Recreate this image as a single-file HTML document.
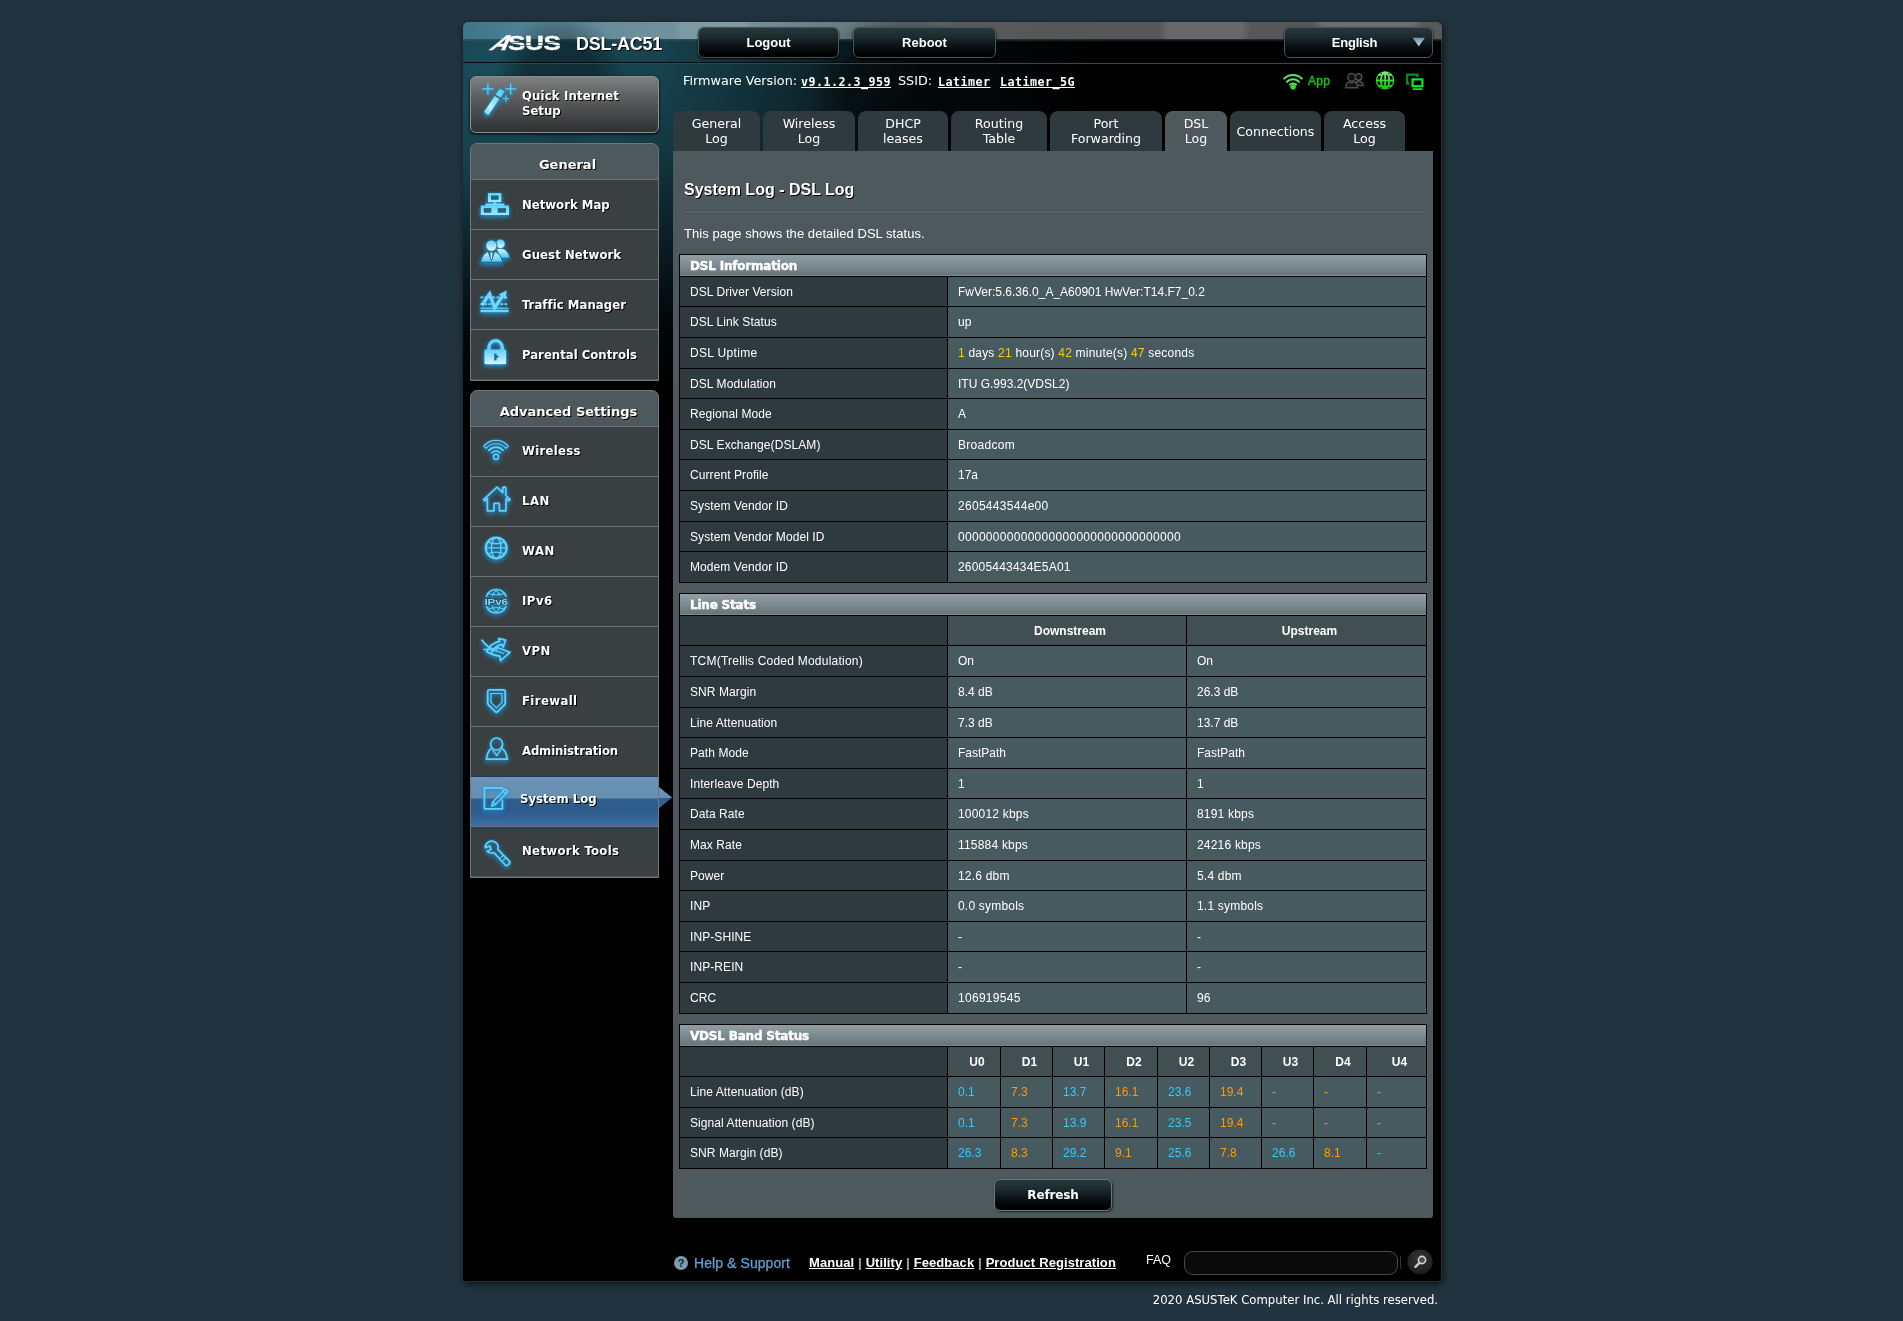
<!DOCTYPE html>
<html lang="en">
<head>
<meta charset="utf-8">
<title>ASUS Wireless Router DSL-AC51 - DSL Log</title>
<style>
html,body{margin:0;padding:0;}
body{width:1903px;height:1321px;overflow:hidden;background:#21333e;position:relative;font-family:"Liberation Sans",Arial,sans-serif;color:#fff;font-size:12px;}
a{color:#fff;}
.abs{position:absolute;}
#wrap{will-change:transform;position:absolute;left:463px;top:22px;width:979px;height:1260px;background:#000;border-radius:5px 5px 4px 4px;overflow:hidden;box-shadow:inset -1px -1px 0 #2c2c2c, 1px 2px 6px rgba(0,0,0,.65);}
#glow{position:absolute;left:0;top:0;width:979px;height:520px;background:
 radial-gradient(ellipse 610px 345px at 30px 40px, rgb(27,75,89) 0%, rgba(24,68,80,.96) 28%, rgba(15,44,52,.78) 55%, rgba(6,18,22,.4) 80%, rgba(0,0,0,0) 100%);}
#topband{position:absolute;left:0;top:0;width:979px;height:17px;background:
 radial-gradient(circle 46px at 742px 8px, rgba(255,255,255,.1) 0, rgba(255,255,255,.1) 80%, rgba(255,255,255,0) 100%),
 radial-gradient(circle 56px at 905px -6px, rgba(255,255,255,.13) 0, rgba(255,255,255,.13) 80%, rgba(255,255,255,0) 100%),
 radial-gradient(circle 40px at 250px 4px, rgba(255,255,255,.08) 0, rgba(255,255,255,.08) 80%, rgba(255,255,255,0) 100%),
 linear-gradient(90deg,#3f7589 0%,#4c8194 6%,#6b909b 17%,#74939b 28%,#66797e 40%,#585c5d 50%,#565656 60%,#585858 100%);}
#topband2{position:absolute;left:0;top:17px;width:979px;height:3px;background:linear-gradient(180deg,rgba(70,95,104,.55),rgba(0,0,0,0));}
#bokeh{position:absolute;left:0;top:0;width:979px;height:300px;background:
 radial-gradient(circle 66px at 98px 58px, rgba(0,0,0,.36) 0, rgba(0,0,0,.34) 55%, rgba(0,0,0,0) 100%),
 radial-gradient(circle 88px at 432px 78px, rgba(0,0,0,.5) 0, rgba(0,0,0,.48) 55%, rgba(0,0,0,0) 100%);}
#hline{position:absolute;left:0;top:40px;width:979px;height:1px;background:#06090b;border-bottom:1px solid #34464f;}
/* header */
#logo{position:absolute;left:22px;top:12px;width:78px;height:18px;overflow:hidden;}
#asus{position:absolute;left:22.5px;top:-3px;font:bold 21px/24px "Liberation Sans",Arial,sans-serif;color:#fff;letter-spacing:-.3px;transform:scale(1.24,1);transform-origin:0 50%;-webkit-text-stroke:.4px #fff;}
#asusA{position:absolute;left:3px;top:-3px;font:bold 21px/24px "Liberation Sans",Arial,sans-serif;color:#fff;transform:scale(1.12,1) skewX(-36deg);transform-origin:0 82%;-webkit-text-stroke:.5px #fff;}
.cut{position:absolute;left:26px;width:49px;height:1px;background:rgba(25,62,76,.6);}
#model{position:absolute;left:113px;top:11px;font:bold 18px/22px "Liberation Sans",Arial,sans-serif;letter-spacing:-.25px;color:#fff;text-shadow:1px 1px 0 #000;}
.hbtn{position:absolute;top:4.6px;height:31px;border-radius:6px;background:linear-gradient(180deg,#27393e 0%,#1c2b2f 30%,#0a1214 62%,#000 92%);border:1px solid #46555a;box-shadow:0 1px 2px #000;box-sizing:border-box;text-align:center;font:bold 13px/29px "Liberation Sans",Arial,sans-serif;color:#fff;}
/* menu */
.mtext{font:bold 13px/15px "DejaVu Sans Condensed","DejaVu Sans",Verdana,sans-serif;color:#fff;text-shadow:1px 1px 0 #000;}
#qis{position:absolute;left:7px;top:54px;width:189px;height:57px;box-sizing:border-box;border:1px solid #8b8f90;border-radius:6px;background:linear-gradient(180deg,#7e8081 0%,#5e6061 35%,#2f3031 100%);box-shadow:0 1px 3px #000;}
#qis .mtext{position:absolute;left:51px;top:11px;}
.mbox{position:absolute;left:7px;width:189px;box-sizing:border-box;background:#4d595d;border:1px solid #6f777a;border-radius:7px 7px 0 0;overflow:hidden;}
.mhead{height:35px;text-align:center;font:bold 13px/42px "DejaVu Sans",Verdana,sans-serif;color:#fff;text-shadow:1px 1px 0 #000;padding-left:6px;}
.mi{position:relative;height:49px;border-top:1px solid #6b7174;background:#3a4042;}
.mi .mtext{position:absolute;left:51px;top:17px;}
.mi svg,#qis svg{position:absolute;left:8px;top:8px;overflow:visible;}
.mi.sel{background:linear-gradient(180deg,#6b93b5 0%,#6690b3 42%,#2f5d8d 46%,#2c5a8a 70%,#3c72a8 100%);border-top:1px solid #27394a;}
.mi.sel .mtext{left:49px;top:14px;}
.adv .mi .mtext{top:16px;}
.adv .mi.sel .mtext{top:14px;}
/* top info */
#fw{position:absolute;left:220px;top:51px;font:12.8px/16px "DejaVu Sans",Verdana,sans-serif;color:#fff;white-space:nowrap;}
#fw span,#fw a{position:absolute;top:0;}
#fw a{font:bold 11.7px/16px "DejaVu Sans Mono","Liberation Mono",monospace;letter-spacing:.46px;color:#fff;text-decoration:underline;top:1px;}
/* tabs */
.tab{position:absolute;top:89px;height:40px;box-sizing:border-box;background:#2f3a3e;border-radius:8px 8px 0 0;text-align:center;font:12.6px/15px "DejaVu Sans",Verdana,sans-serif;color:#fff;padding-top:5px;}
.tab.one{padding-top:13px;}
.tab.on{background:#4d595d;}
/* content */
#content{position:absolute;left:210px;top:129px;width:760px;height:1067px;background:#4d595d;border-radius:0 0 3px 3px;}
#title{position:absolute;left:11px;top:29px;font:bold 16px/20px "Liberation Sans",Arial,sans-serif;text-shadow:1px 1px 0 #000;}
#hr{position:absolute;left:11px;top:59px;width:740px;height:1px;background:#3e4a4e;border-bottom:1px solid #5d696d;}
#desc{position:absolute;left:11px;top:74px;font:13px/18px "Liberation Sans",Arial,sans-serif;letter-spacing:.05px;}
table.ft{position:absolute;left:6px;width:748px;border-collapse:collapse;table-layout:fixed;border:1px solid #000;font:12px/21.6px "Liberation Sans",Arial,sans-serif;}
table.ft td,table.ft th{border:1px solid #000;padding:5px 0 3px 10px;text-align:left;font-weight:normal;white-space:nowrap;overflow:hidden;}
table.ft th{background:#2f3a3e;}
table.ft td{background:#475a5f;}
table.ft thead td{background:linear-gradient(180deg,#92a0a5 0%,#66757c 100%);font:bold 12px/15px "DejaVu Sans",Verdana,sans-serif;padding:4px 0 2px 10px;-webkit-text-stroke:.42px #fff;letter-spacing:-.2px;}
table.ft td.c{text-align:center;font-weight:bold;padding-left:6px;background:#414f53;}
table.ft th{letter-spacing:.08px;}
.n{letter-spacing:.29px;}
.n2{letter-spacing:.2px;}
.y{color:#ffcc00;}
.b{color:#3cf;}
.o{color:#ff9a0a;}
#refresh{position:absolute;left:321px;top:1028px;width:118px;height:32px;box-sizing:border-box;border-radius:6px;background:linear-gradient(180deg,#27393e 0%,#1c2b2f 30%,#0a1214 62%,#000 92%);border:1px solid #6a767a;box-shadow:1px 1px 2px #1a2224;text-align:center;font:bold 12px/31px "DejaVu Sans",Verdana,sans-serif;letter-spacing:-.15px;}
/* footer */
#foot{position:absolute;left:0;top:1228px;width:978px;height:24px;}
#foot a{text-decoration:underline;}
#copy{will-change:transform;position:absolute;left:463px;top:1291.7px;width:975px;text-align:right;font:11.68px/16px "DejaVu Sans",Verdana,sans-serif;color:#fff;}
.ic{fill:none;stroke:#62d0fa;stroke-width:1.7;stroke-linejoin:round;stroke-linecap:round;}
.icf{fill:#7bdcff;stroke:none;}
.mi svg,#qis svg{filter:drop-shadow(0 2px 2px rgba(21,151,224,.78)) drop-shadow(0 0 1px rgba(26,143,208,.6));}
</style>
</head>
<body>
<div id="wrap">
 <div id="glow"></div>
 <div id="topband"></div><div id="topband2"></div><div id="bokeh"></div>
 <div id="hline"></div>
 <div id="logo"><span id="asusA">A</span><span id="asus">SUS</span><span class="cut" style="top:8px"></span><span class="cut" style="top:11px"></span></div>
 <div id="model">DSL-AC51</div>
 <div class="hbtn" style="left:235px;width:141px;">Logout</div>
 <div class="hbtn" style="left:390px;width:143px;">Reboot</div>
 <div class="hbtn" style="left:821px;width:149px;padding-right:8px;letter-spacing:-.2px;">English<svg class="abs" style="left:127px;top:9px" width="14" height="10" viewBox="0 0 14 10"><defs><linearGradient id="tr" x1="0" y1="0" x2="0" y2="1"><stop offset="0" stop-color="#6f8fa8"/><stop offset="1" stop-color="#c4dceb"/></linearGradient></defs><path d="M.6 .8H13L6.8 9.2Z" fill="url(#tr)"/></svg></div>

 <div id="fw"><span style="left:0">Firmware Version:</span><a style="left:118px">v9.1.2.3_959</a><span style="left:215px">SSID:</span><a style="left:255px">Latimer</a><a style="left:317px">Latimer_5G</a></div>

 <div id="sticons">
  <svg class="abs" style="left:819px;top:49px" width="24" height="20" viewBox="0 0 24 20"><g fill="none" stroke="#5fe85f" stroke-linecap="round"><path d="M2.2 7.6A12.6 12.6 0 0 1 19.8 7.6" stroke-width="2"/><path d="M5 10.8A8.4 8.4 0 0 1 17 10.8" stroke-width="2"/><path d="M7.8 13.6A4.6 4.6 0 0 1 14.2 13.6" stroke-width="1.8"/></g><circle cx="11.1" cy="15.7" r="2.8" fill="#2ee02e"/></svg>
  <div class="abs" style="left:845px;top:52px;font:12px/14px 'Liberation Sans',Arial,sans-serif;color:#12c612;-webkit-text-stroke:.4px #12c612;letter-spacing:.3px;">App</div>
  <svg class="abs" style="left:880px;top:49px" width="24" height="20" viewBox="0 0 24 20"><g fill="#111" stroke="#4c4c4c" stroke-width="1.5"><circle cx="15.6" cy="6" r="3.2"/><path d="M11.5 14.5Q12 10.4 15.6 10.2Q19.6 10.4 20.4 14.5Z"/><circle cx="8.6" cy="6.4" r="3.8"/><path d="M2.6 16.8Q3 11.4 6.4 10.8Q8.6 12.6 10.8 10.8Q14.2 11.4 14.8 16.8Z"/></g></svg>
  <svg class="abs" style="left:911px;top:48px" width="22" height="22" viewBox="0 0 22 22"><defs><linearGradient id="gg" x1="0" y1="0" x2="0" y2="1"><stop offset="0" stop-color="#8cf08c"/><stop offset=".45" stop-color="#3be03b"/><stop offset="1" stop-color="#16c716"/></linearGradient></defs><circle cx="11.1" cy="10.4" r="9.2" fill="url(#gg)"/><g fill="#000"><path d="M4.2 6.2Q6 5.6 6.9 5.4Q6.2 7.4 6 9.4H3.4Q3.5 7.6 4.2 6.2ZM3.4 11.4H6Q6.2 13.4 6.9 15.4Q6 15.2 4.2 14.6Q3.5 13.2 3.4 11.4Z"/><path d="M18 6.2Q16.2 5.6 15.3 5.4Q16 7.4 16.2 9.4H18.8Q18.7 7.6 18 6.2ZM18.8 11.4H16.2Q16 13.4 15.3 15.4Q16.2 15.2 18 14.6Q18.7 13.2 18.8 11.4Z"/><path d="M8.9 5Q10 4.8 10.2 4.8V9.4H8Q8.2 7 8.9 5ZM13.3 5Q12.2 4.8 12 4.8V9.4H14.2Q14 7 13.3 5ZM8 11.4H10.2V16Q10 16 8.9 15.8Q8.2 13.8 8 11.4ZM14.2 11.4H12V16Q12.2 16 13.3 15.8Q14 13.8 14.2 11.4Z"/><path d="M6 3.6Q7 2.8 8.6 2.4Q7.8 3.2 7.4 3.9ZM16.2 3.6Q15.2 2.8 13.6 2.4Q14.4 3.2 14.8 3.9ZM6 17.2Q7 18 8.6 18.4Q7.8 17.6 7.4 16.9ZM16.2 17.2Q15.2 18 13.6 18.4Q14.4 17.6 14.8 16.9Z"/></g></svg>
  <svg class="abs" style="left:941px;top:49px" width="22" height="22" viewBox="0 0 22 22"><path d="M3.2 12.4V3.6H13.4V6" fill="none" stroke="#0a8d1c" stroke-width="2.2"/><rect x="2.2" y="11.2" width="3" height="2.6" fill="#0a8d1c"/><rect x="8.6" y="8.4" width="9.8" height="6.8" fill="none" stroke="#12e62a" stroke-width="2.2"/><path d="M8.6 18.2H18.4" stroke="#12e62a" stroke-width="1.8"/></svg>
 </div>
 <div id="qis"><svg width="40" height="34" viewBox="0 0 40 34"><defs><linearGradient id="wd" x1="0" y1="1" x2="1" y2="0"><stop offset="0" stop-color="#52ccfb"/><stop offset=".3" stop-color="#c4f0ff"/><stop offset=".62" stop-color="#7adfff"/><stop offset="1" stop-color="#3fd3ff"/></linearGradient></defs><path d="M4.9 27.1L20.8 3.8L25.6 6.3L9.3 30.3Z" fill="url(#wd)"/><path d="M15.6 9.9L21.6 13.4" stroke="#46606c" stroke-width="1.7"/><g stroke="#62d0fa" stroke-width="1.25" fill="none"><path d="M8.9 -1.8V9.6M3.2 3.9H14.6M31.7 -1.8V9.4M26.4 3.8H37.4"/><path d="M27 10.6V16.8M24 13.7H30" stroke-width="1.05"/></g></svg><div class="mtext"><span style="letter-spacing:.15px">Quick Internet</span><br>Setup</div></div>

 <div class="mbox" style="top:121px;height:238px;">
  <div class="mhead">General</div>
  <div class="mi"><svg width="34" height="34" viewBox="0 0 34 34"><defs><linearGradient id="nmg" x1="0" y1="0" x2="0" y2="1"><stop offset="0" stop-color="#55d4ff"/><stop offset="1" stop-color="#9ee8ff"/></linearGradient></defs><g fill="url(#nmg)"><rect x="9" y="5" width="13.3" height="9.1"/><rect x="14.7" y="14" width="1.9" height="2"/><rect x="6.4" y="15.5" width="18.9" height="2.2"/><rect x="1.8" y="17.5" width="13.5" height="9.5"/><rect x="15.7" y="17.5" width="14.3" height="9.5"/></g><g fill="#27607c"><rect x="12" y="7.5" width="7.6" height="4.3"/><rect x="4.8" y="20.1" width="7.5" height="4.6"/><rect x="18.7" y="20.1" width="8.3" height="4.6"/></g><path d="M15.5 17.7V27" stroke="#c9f3ff" stroke-width=".6"/></svg><div class="mtext">Network Map</div></div>
  <div class="mi"><svg width="34" height="34" viewBox="0 0 34 34"><defs><linearGradient id="gn" x1="0" y1="0" x2="0" y2="1"><stop offset="0" stop-color="#4fd0ff"/><stop offset="1" stop-color="#e6fbff"/></linearGradient><linearGradient id="gn2" x1="0" y1="0" x2="0" y2="1"><stop offset="0" stop-color="#d4f5ff"/><stop offset="1" stop-color="#49c8f7"/></linearGradient></defs><circle cx="21.4" cy="5.8" r="4.3" fill="url(#gn)"/><path d="M18 11.2Q21.4 10 25 11.4Q29.2 13.6 30.4 19.6H21.5Z" fill="url(#gn2)"/><g stroke="#2a5468" stroke-width=".9"><circle cx="12.4" cy="7.6" r="5.7" fill="url(#gn)"/><path d="M1.6 24.2Q3.4 15.4 9.2 13.5L12.4 22.6L15.8 13.5Q21.6 15.4 23.8 24.2Z" fill="url(#gn2)"/></g><path d="M11.5 14.6H13.4L13.1 20L12.4 21.8L11.8 20Z" fill="#c8f2ff"/></svg><div class="mtext" style="letter-spacing:0.08px">Guest Network</div></div>
  <div class="mi"><svg width="34" height="34" viewBox="0 0 34 34"><g fill="none" stroke="#6fd6fb"><path d="M1.5 9.4H29.5M1.5 16.2H29.5" stroke-width="1.7" stroke-dasharray="2.6 1.4"/><path d="M1.5 20.2H29.5" stroke-width="1.1"/><path d="M1.5 23H29.5" stroke-width="2.4"/><path d="M2.8 17.4L10.6 6L15.6 19.8L23.8 7.6" stroke-width="3.4" stroke-linejoin="miter"/></g><path d="M19.8 6.4L27.6 2.6L26.6 11.2Z" fill="#6fd6fb"/></svg><div class="mtext" style="letter-spacing:0.05px">Traffic Manager</div></div>
  <div class="mi"><svg width="34" height="34" viewBox="0 0 34 34"><defs><linearGradient id="pc" x1="0" y1="0" x2="0" y2="1"><stop offset="0" stop-color="#5fd0ff"/><stop offset="1" stop-color="#d5f5ff"/></linearGradient></defs><path d="M10 12V9.3A6.6 6.6 0 0 1 23.2 9.3V12" fill="none" stroke="#63d2ff" stroke-width="3.4"/><rect x="5.4" y="11.5" width="21.8" height="14.8" rx="1.2" fill="url(#pc)"/><path d="M15.2 15.5H17.6V17.6H19.3V19.8H17.6V22.6H15.2Z" fill="#1d6f96"/></svg><div class="mtext">Parental Controls</div></div>
 </div>

 <div class="mbox adv" style="top:368px;height:488px;">
  <div class="mhead" style="padding-left:8px">Advanced Settings</div>
  <div class="mi"><svg width="34" height="34" viewBox="0 0 34 34"><g fill="none" stroke="#62d0fa" stroke-linejoin="round" stroke-linecap="round"><path d="M4.7 11.2A16 16 0 0 1 29.3 11.2L27 13.4A13 13 0 0 0 7 13.4Z" stroke-width="1.15"/><path d="M9.9 15.3A9.6 9.6 0 0 1 24.1 15.3" stroke-width="1.7"/><path d="M12.8 17.7A6 6 0 0 1 21.2 17.7" stroke-width="1.5"/><circle cx="17" cy="21.8" r="2.6" stroke-width="1.5"/></g></svg><div class="mtext" style="letter-spacing:0.3px">Wireless</div></div>
  <div class="mi"><svg width="34" height="34" viewBox="0 0 34 34"><path class="ic" d="M4.6 14.6L18 2.2L23.8 7.5V2.6Q25.3 1.4 26.8 2.6V10.3L31 14.4L29.6 15.8L27 13.6V25.8H20.4V18.4H15V25.8H8.4V13.6L6 15.9Z"/></svg><div class="mtext" style="letter-spacing:0.55px">LAN</div></div>
  <div class="mi"><svg width="34" height="34" viewBox="0 0 34 34"><g class="ic"><circle cx="17.2" cy="12.9" r="10.4" stroke-width="2.2"/><ellipse cx="17.2" cy="12.9" rx="4.8" ry="10.4" stroke-width="1.4"/><path d="M6.8 12.9H27.6M9 7.2Q17.2 10.2 25.4 7.2M9 18.6Q17.2 15.6 25.4 18.6" stroke-width="1.4"/></g></svg><div class="mtext" style="letter-spacing:0.6px">WAN</div></div>
  <div class="mi"><svg width="34" height="34" viewBox="0 0 34 34"><g class="ic" stroke-width="1.5"><path d="M7.6 11A10.4 10.4 0 0 1 26.9 11M7.6 21.5A10.4 10.4 0 0 0 26.9 21.5"/><path d="M13.6 11Q14.6 6.5 17.2 5.8Q19.8 6.5 20.8 11M13.6 21.5Q14.6 25.8 17.2 26.6Q19.8 25.8 20.8 21.5M9.5 8.5Q17.2 11 25 8.5M9.5 24Q17.2 21.5 25 24" stroke-width="1.1"/></g><text x="17.2" y="19.7" text-anchor="middle" font-family="Liberation Sans,Arial,sans-serif" font-size="9.8" font-weight="bold" fill="#7fd8fb" stroke="#3a4042" stroke-width="1.3" paint-order="stroke" textLength="23.5" lengthAdjust="spacingAndGlyphs">IPv6</text></svg><div class="mtext" style="letter-spacing:0.5px">IPv6</div></div>
  <div class="mi"><svg width="34" height="34" viewBox="0 0 34 34"><g class="ic" stroke-width="1.5"><path d="M3 5.2Q9 13.5 17.5 15.2V12.2L31 17.4L21.5 25.6L21 21.2Q12.5 20 7.5 16.2"/><path d="M7.5 16.2Q12 8 20.6 6.4L19.6 3.6L26.6 5.2L24.2 12L22.6 9.4Q15 11.5 12.6 17.6"/><path d="M4.6 14.4Q14 14 24.6 18.6" stroke-width="1.1"/></g></svg><div class="mtext" style="letter-spacing:0.5px">VPN</div></div>
  <div class="mi"><svg width="34" height="34" viewBox="0 0 34 34"><g class="ic"><path d="M10.2 4.8H24.7Q26.2 4.8 26.2 6.4V18Q26.2 19.2 25.2 20.1L18.3 26.9Q17.45 27.6 16.6 26.9L9.7 20.1Q8.7 19.2 8.7 18V6.4Q8.7 4.8 10.2 4.8Z" stroke-width="1.8"/><path d="M11.9 8.5H23V17.4L17.45 22.9L11.9 17.4Z" stroke-width="1.2"/></g></svg><div class="mtext" style="letter-spacing:0.38px">Firewall</div></div>
  <div class="mi"><svg width="34" height="34" viewBox="0 0 34 34"><g class="ic" stroke-width="1.8"><circle cx="17.6" cy="9" r="6"/><path d="M12.6 13.4Q8.6 15.4 7.4 24.2H28.4Q27 15.4 22.8 13.4"/><path d="M14 15.4L17.7 20.6L21.4 15.4" stroke-width="1.4"/></g></svg><div class="mtext" style="letter-spacing:-0.15px">Administration</div></div>
  <div class="mi sel"><svg width="34" height="34" viewBox="0 0 34 34"><g class="ic" stroke-width="1.7"><path d="M23.4 15V23.8H5.4V2.8H23.4V4"/><path d="M26.2 4L29 6.6L16.4 19.6L12.6 21L13.8 17Z" stroke-width="1.5"/><path d="M24 6.2L26.8 8.8M14.2 17L16.2 19" stroke-width="1.2"/></g></svg><div class="mtext">System Log</div></div>
  <div class="mi"><svg width="34" height="34" viewBox="0 0 34 34"><g class="ic" stroke-width="1.9"><path d="M6.2 12.6A6.6 6.6 0 0 1 15.2 6.6Q20.2 9 18.8 14.4L30.4 26.2Q31.4 27.6 30 29L28.6 30.2Q27.2 31 26 29.8L15 17.6Q11.2 18.8 8 16.4L12.2 14.2L11 11Z"/><path d="M22 22.4L24 20.6M24.4 25L26.4 23.2" stroke-width="1.2"/></g></svg><div class="mtext" style="letter-spacing:0.33px">Network Tools</div></div>
 </div>

 <svg class="abs" style="left:196px;top:759px" width="14" height="34" viewBox="0 0 14 34"><defs><linearGradient id="sa" x1="0" y1="0" x2="0" y2="1"><stop offset="0" stop-color="#6b93b5"/><stop offset=".5" stop-color="#6690b3"/><stop offset=".53" stop-color="#2f5d8d"/><stop offset="1" stop-color="#34659a"/></linearGradient></defs><path d="M0 6L13 16.6L0 27.2Z" fill="url(#sa)"/></svg>
 <div class="tab" style="left:210px;width:87px;">General<br>Log</div>
 <div class="tab" style="left:300px;width:92px;">Wireless<br>Log</div>
 <div class="tab" style="left:395px;width:90px;">DHCP<br>leases</div>
 <div class="tab" style="left:488px;width:96px;">Routing<br>Table</div>
 <div class="tab" style="left:587px;width:112px;">Port<br>Forwarding</div>
 <div class="tab on" style="left:702px;width:62px;">DSL<br>Log</div>
 <div class="tab one" style="left:767px;width:91px;">Connections</div>
 <div class="tab" style="left:861px;width:81px;">Access<br>Log</div>

 <div id="content">
  <div id="title">System Log - DSL Log</div>
  <div id="hr"></div>
  <div id="desc">This page shows the detailed DSL status.</div>

  <table class="ft" style="top:102.8px;">
   <colgroup><col style="width:268px"><col></colgroup>
   <thead><tr><td colspan="2">DSL Information</td></tr></thead>
   <tbody>
   <tr><th>DSL Driver Version</th><td>FwVer:5.6.36.0_A_A60901 HwVer:T14.F7_0.2</td></tr>
   <tr><th>DSL Link Status</th><td>up</td></tr>
   <tr><th style="letter-spacing:.33px">DSL Uptime</th><td class="n2"><span class="y">1</span> days <span class="y">21</span> hour(s) <span class="y">42</span> minute(s) <span class="y">47</span> seconds</td></tr>
   <tr><th>DSL Modulation</th><td>ITU G.993.2(VDSL2)</td></tr>
   <tr><th>Regional Mode</th><td>A</td></tr>
   <tr><th>DSL Exchange(DSLAM)</th><td class="n">Broadcom</td></tr>
   <tr><th>Current Profile</th><td>17a</td></tr>
   <tr><th>System Vendor ID</th><td class="n">2605443544e00</td></tr>
   <tr><th>System Vendor Model ID</th><td class="n">00000000000000000000000000000000</td></tr>
   <tr><th>Modem Vendor ID</th><td class="n2">26005443434E5A01</td></tr>
   </tbody>
  </table>

  <table class="ft" style="top:441.8px;">
   <colgroup><col style="width:268px"><col style="width:239px"><col></colgroup>
   <thead><tr><td colspan="3">Line Stats</td></tr></thead>
   <tbody>
   <tr><th></th><td class="c">Downstream</td><td class="c">Upstream</td></tr>
   <tr><th style="letter-spacing:.23px">TCM(Trellis Coded Modulation)</th><td>On</td><td>On</td></tr>
   <tr><th>SNR Margin</th><td>8.4 dB</td><td>26.3 dB</td></tr>
   <tr><th>Line Attenuation</th><td>7.3 dB</td><td>13.7 dB</td></tr>
   <tr><th>Path Mode</th><td>FastPath</td><td>FastPath</td></tr>
   <tr><th>Interleave Depth</th><td>1</td><td>1</td></tr>
   <tr><th>Data Rate</th><td class="n2">100012 kbps</td><td class="n2">8191 kbps</td></tr>
   <tr><th>Max Rate</th><td class="n2">115884 kbps</td><td class="n2">24216 kbps</td></tr>
   <tr><th>Power</th><td class="n2">12.6 dbm</td><td class="n2">5.4 dbm</td></tr>
   <tr><th>INP</th><td class="n2">0.0 symbols</td><td class="n2">1.1 symbols</td></tr>
   <tr><th>INP-SHINE</th><td>-</td><td>-</td></tr>
   <tr><th>INP-REIN</th><td>-</td><td>-</td></tr>
   <tr><th>CRC</th><td class="n">106919545</td><td>96</td></tr>
   </tbody>
  </table>

  <table class="ft" style="top:872.6px;">
   <colgroup><col style="width:268px"><col style="width:53px"><col style="width:52px"><col style="width:52px"><col style="width:53px"><col style="width:52px"><col style="width:52px"><col style="width:52px"><col style="width:53px"><col></colgroup>
   <thead><tr><td colspan="10">VDSL Band Status</td></tr></thead>
   <tbody>
   <tr><th></th><td class="c">U0</td><td class="c">D1</td><td class="c">U1</td><td class="c">D2</td><td class="c">U2</td><td class="c">D3</td><td class="c">U3</td><td class="c">D4</td><td class="c">U4</td></tr>
   <tr><th>Line Attenuation (dB)</th><td class="b">0.1</td><td class="o">7.3</td><td class="b">13.7</td><td class="o">16.1</td><td class="b">23.6</td><td class="o">19.4</td><td class="b">-</td><td class="o">-</td><td class="b">-</td></tr>
   <tr><th>Signal Attenuation (dB)</th><td class="b">0.1</td><td class="o">7.3</td><td class="b">13.9</td><td class="o">16.1</td><td class="b">23.5</td><td class="o">19.4</td><td class="b">-</td><td class="o">-</td><td class="b">-</td></tr>
   <tr><th>SNR Margin (dB)</th><td class="b">26.3</td><td class="o">8.3</td><td class="b">29.2</td><td class="o">9.1</td><td class="b">25.6</td><td class="o">7.8</td><td class="b">26.6</td><td class="o">8.1</td><td class="b">-</td></tr>
   </tbody>
  </table>

  <div id="refresh">Refresh</div>
 </div>

 <div id="foot">
  <div class="abs" style="left:211px;top:6px;width:14px;height:14px;border-radius:7px;background:#7b9bb0;color:#0d1a22;font:bold 11px/14px 'Liberation Sans',Arial,sans-serif;text-align:center;">?</div>
  <svg class="abs" style="left:944px;top:-1px" width="26" height="26" viewBox="0 0 26 26"><defs><radialGradient id="sb" cx=".5" cy=".35" r=".65"><stop offset="0" stop-color="#343430"/><stop offset=".8" stop-color="#222220"/><stop offset="1" stop-color="#151515"/></radialGradient></defs><circle cx="13" cy="13" r="12.6" fill="url(#sb)"/><circle cx="15" cy="11" r="3.6" fill="#4a4a4a" stroke="#d2d2d2" stroke-width="1.6"/><path d="M12.4 13.8L8.4 17.8" stroke="#c8c8c8" stroke-width="2.4" stroke-linecap="round"/></svg>
  <div class="abs" style="left:937px;top:6px;width:1px;height:13px;background:#333;"></div>
  <div class="abs" style="left:231px;top:4px;font:14px/18px 'Liberation Sans',Arial,sans-serif;color:#5ea3d6;-webkit-text-stroke:.25px #5ea3d6;letter-spacing:.08px;">Help &amp; Support</div>
  <div class="abs" style="left:346px;top:4px;font:bold 13px/18px 'Liberation Sans',Arial,sans-serif;white-space:nowrap;word-spacing:.3px;letter-spacing:.07px;"><a>Manual</a> <span style="font-weight:normal">|</span> <a>Utility</a> <span style="font-weight:normal">|</span> <a>Feedback</a> <span style="font-weight:normal">|</span> <a>Product Registration</a></div>
  <div class="abs" style="left:683px;top:1px;font:12.5px/18px 'Liberation Sans',Arial,sans-serif;">FAQ</div>
  <div class="abs" style="left:721px;top:1px;width:214px;height:24px;box-sizing:border-box;border:1px solid #4a4a4a;border-radius:9px;background:#0a0a0a;"></div>
 </div>
</div>
<div id="copy">2020 ASUSTeK Computer Inc. All rights reserved.</div>
</body>
</html>
